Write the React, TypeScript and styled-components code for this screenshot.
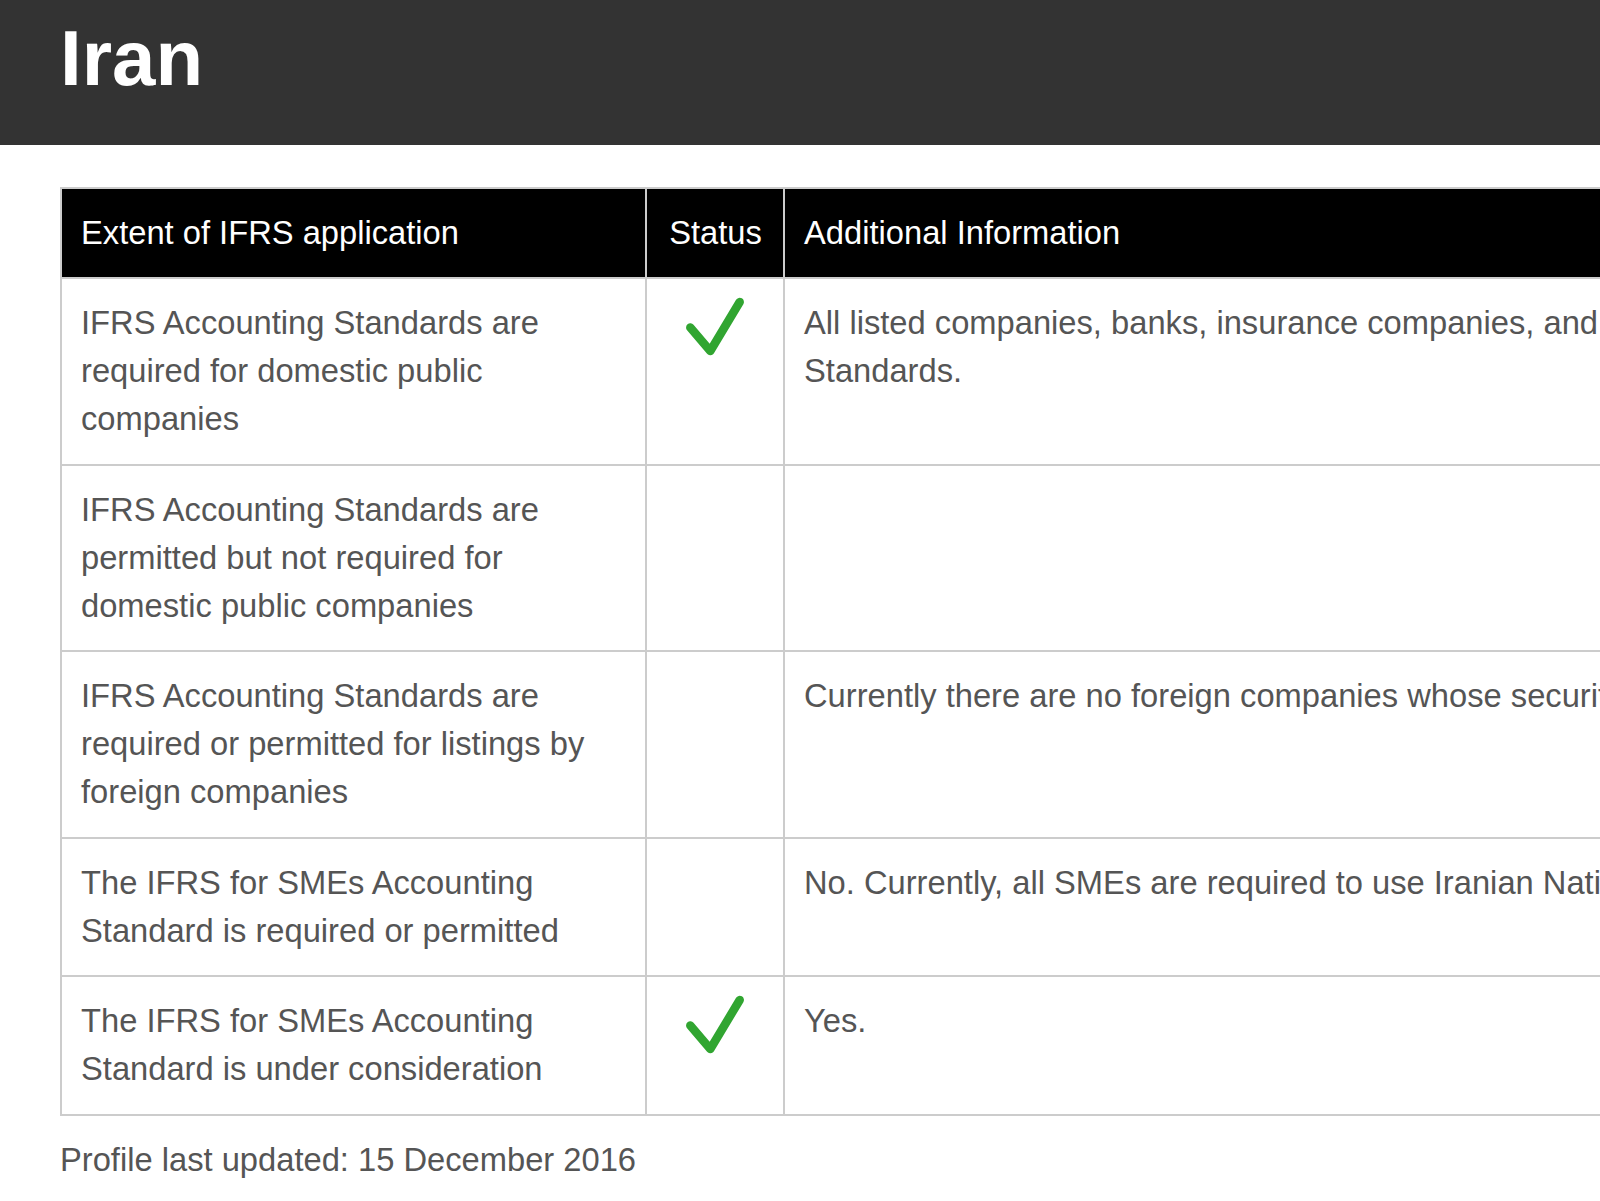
import styled, { createGlobalStyle } from 'styled-components';

const rows = [
  {
    extent: 'IFRS Accounting Standards are required for domestic public companies',
    status: true,
    info: [
      'All listed companies, banks, insurance companies, and other public interest entities are required to use IFRS',
      'Standards.',
    ],
  },
  {
    extent: 'IFRS Accounting Standards are permitted but not required for domestic public companies',
    status: false,
    info: [],
  },
  {
    extent: 'IFRS Accounting Standards are required or permitted for listings by foreign companies',
    status: false,
    info: ['Currently there are no foreign companies whose securities trade in a public market in Iran.'],
  },
  {
    extent: 'The IFRS for SMEs Accounting Standard is required or permitted',
    status: false,
    info: ['No. Currently, all SMEs are required to use Iranian National Accounting Standards.'],
  },
  {
    extent: 'The IFRS for SMEs Accounting Standard is under consideration',
    status: true,
    info: ['Yes.'],
  },
];

export default function App() {
  return (
    <>
      <GlobalStyle />
      <Banner>
        <Title>Iran</Title>
      </Banner>
      <Content>
        <ProfileTable>
          <colgroup>
            <col style={{ width: 585 }} />
            <col style={{ width: 138 }} />
            <col style={{ width: 2200 }} />
          </colgroup>
          <thead>
            <tr>
              <HeadCell>Extent of IFRS application</HeadCell>
              <HeadCell $center>Status</HeadCell>
              <HeadCell>Additional Information</HeadCell>
            </tr>
          </thead>
          <tbody>
            {rows.map((row, index) => (
              <tr key={index}>
                <Cell>{row.extent}</Cell>
                <Cell $center>{row.status && <CheckMark />}</Cell>
                <Cell>
                  {row.info.map((line, i) => (
                    <span key={i}>
                      {i > 0 && <br />}
                      {line}
                    </span>
                  ))}
                </Cell>
              </tr>
            ))}
          </tbody>
        </ProfileTable>
        <Updated>Profile last updated: 15 December 2016</Updated>
      </Content>
    </>
  );
}

function CheckMark() {
  return (
    <Tick width="60" height="58" viewBox="0 0 60 58">
      <path d="M4.3 28.5 L24.3 52 L53.7 3" />
    </Tick>
  );
}

const GlobalStyle = createGlobalStyle`
  html, body {
    margin: 0;
    padding: 0;
    overflow-x: hidden;
    background: #fff;
  }

  body {
    font-family: "Liberation Sans", Arial, sans-serif;
  }
`;

const Banner = styled.header`
  background: #333333;
  padding: 13px 60px 42px;
`;

const Title = styled.h1`
  margin: 0;
  color: #fff;
  font-size: 78px;
  font-weight: 700;
  line-height: 90px;
`;

const Content = styled.main`
  padding: 42px 0 0 60px;
`;

const ProfileTable = styled.table`
  table-layout: fixed;
  border-collapse: separate;
  border-spacing: 0;
  width: 2925px;
  border-top: 2px solid #cccccc;
  border-left: 2px solid #cccccc;
  font-size: 32.7px;
  line-height: 48px;
`;

const HeadCell = styled.th<{ $center?: boolean }>`
  background: #000;
  color: #fff;
  font-weight: 400;
  text-align: ${(p) => (p.$center ? 'center' : 'left')};
  padding: 20px 18px 20px 19px;
  border-right: 2px solid #cccccc;
  border-bottom: 2px solid #cccccc;
  white-space: nowrap;
`;

const Cell = styled.td<{ $center?: boolean }>`
  color: #555555;
  vertical-align: top;
  text-align: ${(p) => (p.$center ? 'center' : 'left')};
  padding: 20px 18px 20.5px 19px;
  border-right: 2px solid #cccccc;
  border-bottom: 2px solid #cccccc;
`;

const Tick = styled.svg`
  display: block;
  margin: 0 auto;
  overflow: visible;

  path {
    fill: none;
    stroke: #31a531;
    stroke-width: 8.5;
    stroke-linecap: round;
    stroke-linejoin: round;
  }
`;

const Updated = styled.p`
  margin: 20px 0 0;
  color: #555555;
  font-size: 32.7px;
  line-height: 48px;
`;
